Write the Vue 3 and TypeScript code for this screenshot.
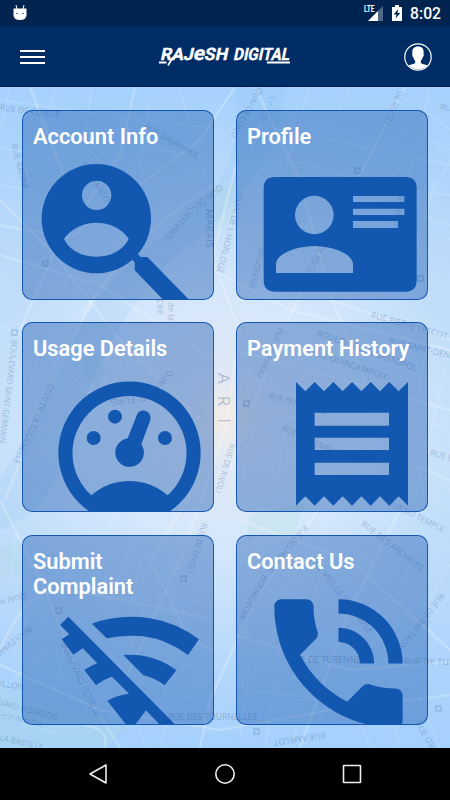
<script setup lang="ts">
interface Tile {
  title: string
  viewBox: string
  paths: string[]
  transform?: string
}

interface StreetLabel {
  text: string
  x: number
  y: number
  angle: number
  length?: number
}

const tiles: Tile[] = [
  {
    title: 'Account Info',
    viewBox: '66 60 576 570',
    paths: [
      'M125 386a164 164 0 1 0 328 0a164 164 0 1 0-328 0zM246 316a44 44 0 1 1 88 0a44 44 0 1 1-88 0zM192 446Q208 424 234 411Q290 386 345 411Q371 424 386 446C354 518 224 518 192 446z',
      'M414 492L422 501H442L571 633H493L404 541V517L396 509z',
    ],
  },
  {
    title: 'Profile',
    viewBox: '33 60 576 570',
    paths: [
      'M150 261H541Q575 261 575 295V571Q575 605 541 605H150Q116 605 116 571V295Q116 261 150 261zM210 375a58 57.500 0 1 0 116 0a58 57.500 0 1 0-116 0zM153 549H384V524C384 488 315 468 268 468S153 488 153 524zM384 318V336H538V318zM384 356V375H538V356zM384 393V414H519V393z',
    ],
  },
  {
    title: 'Usage Details',
    viewBox: '66 67 576 570',
    paths: [
      'M175 459a213.500 213.500 0 1 0 427 0a213.500 213.500 0 1 0-427 0zM274 587A171 171 0 1 1 503 587Q452 544 388 544T274 587z',
      'M260 415a21 21 0 1 0 42 0a21 21 0 1 0-42 0zM324 351a21 21 0 1 0 42 0a21 21 0 1 0-42 0zM474 415a21 21 0 1 0 42 0a21 21 0 1 0-42 0z',
      'M412 342A22 22 0 0 1 451 361L424 434A43 43 0 1 1 383 416z',
    ],
  },
  {
    title: 'Payment History',
    viewBox: '33 67 576 570',
    paths: [
      'M213 247l28 28 28-28 28 28 28-28 28 28 28-28 28 28 28-28 28 28 28-28 28 28 28-28V618l-28-28-28 28-28-28-28 28-28-28-28 28-28-28-28 28-28-28-28 28-28-28-28 28zM269 339V378H492V339zM269 414V451H492V414zM269 489V526H492V489z',
    ],
  },
  {
    title: 'Submit Complaint',
    viewBox: '66 75 576 570',
    paths: [
      'M205 320L530 648H483L438 601L405 645H379L322 572Q350 555 387 551L336 500Q310 508 288 526L253 480Q272 467 292 460L248 415L220 434L185 388L208 373L180 345z',
      'M276 341Q360 311 450 325Q528 337 597 388L564 435Q500 388 430 379Q375 373 320 385z',
      'M370 435Q460 428 529 481L494 526Q463 503 430 496z',
    ],
  },
  {
    title: 'Contact Us',
    viewBox: '33 75 576 570',
    transform: 'translate(83.8 203.8) scale(21.39)',
    paths: [
      'M20 15.5c-1.25 0-2.45-.2-3.57-.57-.35-.11-.74-.03-1.02.24l-2.2 2.2c-2.83-1.44-5.15-3.75-6.59-6.58l2.2-2.21c.28-.27.36-.66.25-1.01C8.7 6.45 8.5 5.25 8.5 4c0-.55-.45-1-1-1H4c-.55 0-1 .45-1 1 0 9.39 7.61 17 17 17 .55 0 1-.45 1-1v-3.500c0-.55-.45-1-1-1zM19 12h2c0-4.970-4.030-9-9-9v2c3.870 0 7 3.130 7 7zm-4 0h2c0-2.760-2.240-5-5-5v2c1.660 0 3 1.340 3 3z',
    ],
  },
]

const labels: StreetLabel[] = [
  { text: 'RUE DE CONDÉ', x: 0, y: 108, angle: 7, length: 60 },
  { text: 'RUE RACINE', x: 13, y: 144, angle: 75, length: 48 },
  { text: 'RUE DAUPHINE', x: 144, y: 126, angle: 30, length: 62 },
  { text: 'RUE DANTON', x: 83, y: 163, angle: 58, length: 52 },
  { text: 'QUAI DES', x: 221, y: 186, angle: 141, length: 36 },
  { text: 'ORFEVRES', x: 191, y: 208, angle: 129, length: 40 },
  { text: 'MARAIS', x: 208, y: 209, angle: 90, length: 39 },
  { text: "QUAI DE L'HORLOGE", x: 240, y: 193, angle: 105, length: 83 },
  { text: 'QUAI DE CONTI', x: 260, y: 88, angle: 120, length: 56 },
  { text: 'DE RIVOLI', x: 400, y: 91, angle: 113, length: 36 },
  { text: 'RUE', x: 440, y: 107, angle: 12 },
  { text: 'RUE BERGER', x: 401, y: 188, angle: 97, length: 45 },
  { text: 'REGISSERIE', x: 262, y: 248, angle: 106, length: 42 },
  { text: 'RUE DE RIVOLI', x: 328, y: 230, angle: 114, length: 50 },
  { text: 'BOULEVARD SAINT-GERMAIN', x: 14, y: 340, angle: 97, length: 104 },
  { text: 'QUAI DE LA TOURNELLE', x: 51, y: 384, angle: 114, length: 87 },
  { text: 'QUAI AUX', x: 171, y: 371, angle: 130, length: 34 },
  { text: 'FLEURS', x: 146, y: 397, angle: 172, length: 36 },
  { text: 'RUE DE RIVOLI', x: 232, y: 444, angle: 107, length: 51 },
  { text: 'RUE PIERRE LESCOT', x: 371, y: 315, angle: 16, length: 79 },
  { text: 'BOULEVARD SEBASTOPOL', x: 317, y: 333, angle: 20, length: 106 },
  { text: 'RUE SAINT-DENIS', x: 389, y: 341, angle: 14, length: 70 },
  { text: 'RUE QUINCAMPOIX', x: 312, y: 352, angle: 19, length: 79 },
  { text: 'RUE DU RENARD', x: 269, y: 396, angle: 16, length: 60 },
  { text: 'RUE DU TEMPLE', x: 282, y: 428, angle: 25, length: 61 },
  { text: 'RUE DE RIVOLI', x: 281, y: 328, angle: 114, length: 54 },
  { text: 'RUE BEAUBOURG', x: 430, y: 453, angle: 15 },
  { text: 'RUE DU TEMPLE', x: 388, y: 503, angle: 26, length: 62 },
  { text: 'RUE DES ARCHIVES', x: 362, y: 523, angle: 38, length: 76 },
  { text: 'RUE DES FRANCS', x: 306, y: 526, angle: 130, length: 58 },
  { text: 'BOURGEOIS', x: 265, y: 575, angle: 119, length: 50 },
  { text: 'RUE VIEILLE DU TEMPLE', x: 312, y: 558, angle: 52, length: 95 },
  { text: 'RUE DE BRETAGNE', x: 442, y: 594, angle: 128, length: 74 },
  { text: 'RUE DE TURENNE', x: 289, y: 661, angle: 0, length: 72 },
  { text: 'RUE DE TURENNE', x: 404, y: 662, angle: 1, length: 74 },
  { text: 'RUE DES TOURNELLES', x: 168, y: 718, angle: 0, length: 89 },
  { text: 'RUE AMELOT', x: 325, y: 734, angle: 171, length: 52 },
  { text: 'RUE OBERKAMPF', x: 417, y: 722, angle: 60 },
  { text: 'BOULEVARD HENRI IV', x: 63, y: 643, angle: 65, length: 80 },
  { text: 'RUE DE RIVOLI', x: 204, y: 523, angle: 107, length: 52 },
  { text: 'QUAI HENRI IV', x: 26, y: 595, angle: 166, length: 54 },
  { text: 'BOULEVARD', x: 31, y: 627, angle: 142, length: 46 },
  { text: 'ILLON', x: 0, y: 684, angle: 9, length: 24 },
  { text: 'VARD BOURDON', x: 0, y: 703, angle: 15, length: 59 },
  { text: 'LA BASTILLE', x: 0, y: 738, angle: 14, length: 44 },
]

const avenues: string[] = [
  'M0 200L55 255L118 338L200 420',
  'M0 255L100 285L214 360',
  'M30 87L75 205L20 330',
  'M0 225L70 238L120 200L200 140L235 87',
  'M135 87L120 155L60 245',
  'M214 185Q145 225 92 300L42 405L5 500',
  'M236 165L212 260L240 330L225 430L180 560L125 680',
  'M255 87L300 180L330 295L390 440',
  'M405 87L370 155L320 250L270 360L230 470',
  'M214 270L290 310L450 350',
  'M330 300L450 340M236 350L450 410M236 400L330 430L450 480',
  'M240 520L350 560L450 650',
  'M318 510L255 600L210 700L200 748',
  'M235 635L350 670L450 662',
  'M400 510L350 610L300 748',
  'M0 500L45 590L90 700L120 748',
  'M0 650Q25 590 60 591T214 620',
  'M0 665L100 710L220 730L330 710L450 695',
  'M85 725Q110 730 105 748',
  'M200 480L150 560L190 640L214 650',
]

const lanes: string[] = [
  'M0 100L85 112L210 128M10 87L0 132M55 87L45 140M92 87L85 138L30 170',
  'M0 148L22 151L30 190L0 185M24 110L90 150L145 210M0 280L20 265L80 295',
  'M110 115L155 150L210 155M150 98L140 165L170 200M180 90L205 175',
  'M30 250L75 205L120 245M20 285L55 245M60 290L90 250M110 280L75 320',
  'M236 120L450 165M270 100L245 165M310 87L285 170M350 87L330 130L365 150',
  'M430 87L405 190L450 195M425 110L450 130M405 130L450 150M390 170L450 240M365 200L450 225',
  'M410 200L430 300M435 180L410 275M450 160L425 210M290 160L360 180L350 240',
  'M285 200L355 216M275 220L345 235M300 185L275 240M320 190L300 250',
  'M0 325L65 355L110 330M0 350L42 375L90 440M20 360L0 390M45 335L30 382M68 325L55 368',
  'M80 345L170 370L205 330M65 370L110 410M90 380L150 390M110 345L90 440M130 350L115 430M154 355L140 400',
  'M28 420L85 438L60 510M45 400L105 420M30 450L90 475M20 475L75 505M125 445L190 480M110 470L165 510',
  'M245 375L305 400M255 345L235 450M270 360L315 385M240 420L300 455M245 450L290 480M260 395L240 490M290 380L275 500',
  'M330 360L380 400M355 330L310 430M380 340L350 420M405 350L370 450M430 330L400 490M450 350L415 500',
  'M330 390L450 430M340 440L450 490M360 465L440 505M250 505L290 460L350 490',
  'M0 530L70 550L60 610M20 510L10 580L70 600M85 540L130 550L110 600M115 540L175 570M145 540L130 610',
  'M105 580L210 605M130 620L210 645M165 660L205 670L195 700L160 685zM145 600L120 690M185 610L160 710',
  'M30 600L20 650L80 690M50 650L0 690M70 620L55 690M0 715L60 735M100 640L170 730M140 730L145 748M165 725L160 748',
  'M240 550L310 590M260 530L235 575M245 600L320 625M260 580L240 650M290 570L270 650M325 560L300 645',
  'M350 550L420 590M380 530L330 620M420 545L370 650M450 565L400 650M360 590L430 630M330 625L400 645',
  'M250 665L240 740M275 680L265 748M310 690L290 748M345 680L370 748M380 680L400 748M410 675L440 748M245 690L420 710',
]
</script>

<template>
  <div class="screen">
    <div class="status">
      <svg class="droid" viewBox="0 0 14 18">
        <path d="M3 1l1 4M11 1l-1 4" stroke="#fff" />
        <path d="M.5 4.500H13.500V11Q13.500 16 7 16T.5 11z" fill="#fff" />
        <circle cx="4" cy="9.500" r=".8" fill="#32547d" />
        <circle cx="10" cy="9.500" r=".8" fill="#32547d" />
      </svg>
      <div class="indicators">
        <svg class="signal" viewBox="0 0 20 18">
          <path d="M4 17L19 2V17z" fill="#4d6889" />
          <path d="M4 17L14 7V17z" fill="#fff" />
          <text x="0" y="8" class="lte" textLength="10.500" lengthAdjust="spacingAndGlyphs">LTE</text>
        </svg>
        <svg class="battery" viewBox="0 0 10 16" preserveAspectRatio="none">
          <path d="M3 0H7V2H10V16H0V2H3z" fill="#fff" />
          <path d="M6.300 4L1.600 9.500H4.500L3.500 13.500L8.400 8H5.500z" fill="#00244f" />
        </svg>
        <span class="clock">8:02</span>
      </div>
    </div>

    <header class="bar">
      <button class="menu" type="button"><i></i><i></i><i></i></button>
      <svg class="logo" viewBox="0 0 134 24">
        <g class="logo-text">
          <text transform="translate(2 16) skewX(-12)" textLength="67" lengthAdjust="spacingAndGlyphs">RAJ<tspan font-size="20">e</tspan>SH</text>
          <text transform="translate(75 16) skewX(-12)" textLength="56" lengthAdjust="spacingAndGlyphs">DIGITAL</text>
        </g>
        <path d="M1 18.500H8.500M109 18.500H132" stroke="#fff" stroke-width="2" />
        <path d="M10 21.500L15 13" stroke="#fff" stroke-width="1.700" />
      </svg>
      <svg class="avatar" viewBox="0 0 28 28">
        <circle cx="14" cy="14" r="13.200" fill="none" stroke="#fff" stroke-width="1.200" />
        <path d="M14 3.500C18 3.500 20.200 6 19.600 10.500Q20.200 13 18.800 14Q18.300 16.500 16.800 18V19.500Q17 21 23.500 22.200Q19.500 26.500 14 26.500T4.500 22.200Q11 21 11.200 19.500V18Q9.700 16.500 9.200 14Q7.800 13 8.400 10.500C7.800 6 10 3.500 14 3.500z" fill="#fff" />
      </svg>
    </header>

    <main class="content">
      <svg class="map" viewBox="0 87 450 661">
        <path class="park" d="M0 690L130 725L105 748H0zM210 190l25-8v40l-18 5zM88 350l20 18-10 20-18-14zM250 515l55-12-10 30-48 5zM0 550l20-10v35H0z" />
        <path class="river" d="M235 87Q250 180 165 235Q85 290 45 400L0 480V530Q55 510 70 440Q105 330 170 260Q280 180 285 87z" />
        <path v-for="(d, i) in lanes" :key="'l' + i" class="lane" :d="d" />
        <path v-for="(d, i) in avenues" :key="'a' + i" class="avenue" :d="d" />
        <text
          v-for="(s, i) in labels"
          :key="'t' + i"
          class="street"
          :transform="`translate(${s.x} ${s.y}) rotate(${s.angle})`"
          :textLength="s.length"
          lengthAdjust="spacingAndGlyphs"
          dominant-baseline="middle"
        >{{ s.text }}</text>
        <text class="city" transform="translate(218 373) rotate(90)">ARI</text>
        <text class="water" transform="translate(271 94) rotate(115)" textLength="28">Seine</text>
        <text class="water" transform="translate(0 718) rotate(12)">ent-Martin</text>
        <text class="street" transform="translate(168 302) rotate(88)">de la</text>
        <text class="street" transform="translate(157 299) rotate(88)">Cité</text>
        <path
          class="metro"
          d="M43 261h5v5h-5zM355 168h5v5h-5zM418 276h5v5h-5zM12 330h5v5h-5zM244 401h5v5h-5zM56 608h5v5h-5zM181 576h5v5h-5zM254 729h5v5h-5zM436 706h5v5h-5z"
        />
      </svg>

      <div class="tiles">
        <section v-for="tile in tiles" :key="tile.title" class="tile">
          <svg class="picture" :viewBox="tile.viewBox" preserveAspectRatio="none">
            <g :transform="tile.transform">
              <path v-for="(d, i) in tile.paths" :key="i" :d="d" fill-rule="evenodd" />
            </g>
          </svg>
          <h2 class="title">{{ tile.title }}</h2>
        </section>
      </div>
    </main>

    <nav class="navbar">
      <svg viewBox="0 0 20 22"><path d="M17 2V20L1 11z" /></svg>
      <svg viewBox="0 0 20 22"><circle cx="10" cy="11" r="9.200" /></svg>
      <svg viewBox="0 0 20 22"><rect x="1.500" y="2.500" width="17" height="17" rx=".5" /></svg>
    </nav>
  </div>
</template>

<style>
body {
  margin: 0;
  background: #000;
}
</style>

<style scoped>
.screen {
  width: 450px;
  height: 800px;
  display: flex;
  flex-direction: column;
  overflow: hidden;
  font-family: Roboto, 'Liberation Sans', sans-serif;
}

.status {
  height: 26px;
  flex: none;
  box-sizing: border-box;
  padding: 0 9px 0 13px;
  display: flex;
  justify-content: space-between;
  align-items: center;
  background: #00244f;
}

.droid {
  width: 14px;
  height: 18px;
}

.indicators {
  display: flex;
  align-items: center;
}

.signal {
  width: 20px;
  height: 18px;
  margin-bottom: 1px;
  overflow: visible;
}

.lte {
  font: 700 8.500px Roboto, sans-serif;
  fill: #fff;
}

.battery {
  width: 10px;
  height: 16px;
  margin: 0 8px 0 8px;
}

.clock {
  color: #fff;
  font-size: 15.700px;
  font-weight: 500;
  line-height: 26px;
  padding-top: 2px;
}

.bar {
  height: 61px;
  flex: none;
  box-sizing: border-box;
  padding: 0 18px 0 20px;
  display: grid;
  grid-template-columns: 138px 134px 1fr;
  align-items: center;
  background: #002d66;
  border-bottom: 1px solid #00195c;
}

.menu {
  width: 25px;
  padding: 2px 0 0;
  border: 0;
  background: none;
  display: flex;
  flex-direction: column;
  gap: 4px;
}

.menu i {
  height: 2px;
  background: #fff;
}

.logo {
  width: 134px;
  height: 24px;
  overflow: visible;
}

.logo-text {
  font: 700 17px Roboto, sans-serif;
  fill: #fff;
  stroke: #fff;
  stroke-width: 0.350;
}

.avatar {
  width: 28px;
  height: 28px;
  justify-self: end;
  margin-top: 1px;
}

.content {
  height: 661px;
  flex: none;
  display: grid;
  background:
    radial-gradient(circle at 225px 330px, rgba(255, 240, 226, 0.8) 0, rgba(244, 241, 243, 0.6) 45px, rgba(230, 240, 252, 0.6) 130px, rgba(205, 228, 251, 0.3) 240px, rgba(200, 225, 251, 0) 330px),
    linear-gradient(180deg, #a5d1fc 0%, #bad9fa 30%, #c3defa 55%, #b2d6fb 80%, #a4d0fc 100%);
}

.map,
.tiles {
  grid-area: 1 / 1;
}

.map {
  width: 450px;
  height: 661px;
}

.park {
  fill: rgba(175, 221, 220, 0.25);
}

.river {
  fill: rgba(125, 182, 242, 0.13);
}

.lane {
  fill: none;
  stroke: rgba(255, 255, 255, 0.17);
  stroke-width: 1.300;
}

.avenue {
  fill: none;
  stroke: rgba(255, 255, 255, 0.23);
  stroke-width: 2.500;
}

.street {
  font: 8.500px 'Open Sans', sans-serif;
  fill: rgba(72, 108, 155, 0.38);
}

.water {
  font: italic 9px 'Open Sans', sans-serif;
  fill: rgba(70, 135, 205, 0.35);
}

.city {
  font: 17px 'Open Sans', sans-serif;
  letter-spacing: 12px;
  fill: rgba(100, 125, 160, 0.42);
}

.metro {
  fill: none;
  stroke: rgba(80, 125, 180, 0.3);
  stroke-width: 1.500;
}

.tiles {
  padding: 23px 22px;
  display: grid;
  grid-template-columns: 192px 192px;
  grid-template-rows: 190px 191px 190px;
  align-items: start;
  gap: 22px;
}

.tile {
  height: 190px;
  display: grid;
  align-items: start;
  box-sizing: border-box;
  border: 1px solid rgba(10, 78, 172, 0.9);
  border-radius: 10px;
  overflow: hidden;
  background: rgba(15, 80, 170, 0.39);
}

.picture,
.title {
  grid-area: 1 / 1;
}

.picture {
  width: 192px;
  height: 190px;
  margin: -1px;
  fill: #1358b0;
}

.title {
  width: 175px;
  margin: 13px 0 0 10px;
  color: #fff;
  font-size: 21.800px;
  font-weight: 600;
  line-height: 25px;
}

.tile:nth-child(5) .title {
  width: 130px;
}

.navbar {
  height: 52px;
  flex: none;
  display: flex;
  justify-content: center;
  align-items: center;
  gap: 106.500px;
  background: #000;
}

.navbar svg {
  width: 20px;
  height: 22px;
  fill: none;
  stroke: #eee;
  stroke-width: 1.600;
  stroke-linejoin: round;
}
</style>
